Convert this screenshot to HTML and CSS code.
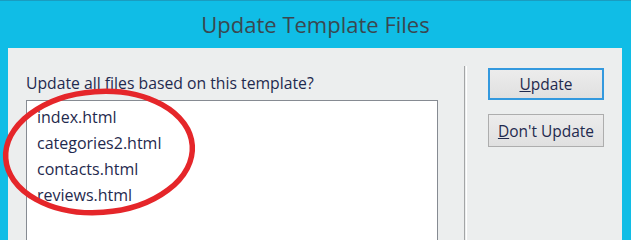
FILE: index.html
```html
<!DOCTYPE html>
<html>
<head>
<meta charset="utf-8">
<link rel="stylesheet" href="styles.css">
</head>
<body>
<div class="window">
  <div class="titlebar">Update Template Files</div>
  <div class="panel">
    <div class="main">
      <div class="label">Update all files based on this template?</div>
      <div class="list">
        <div class="item">index.html</div>
        <div class="item">categories2.html</div>
        <div class="item">contacts.html</div>
        <div class="item">reviews.html</div>
      </div>
    </div>
    <div class="sep"></div>
    <div class="buttons">
      <div class="btn btn-default"><span class="key">U</span>pdate</div>
      <div class="btn"><span class="key">D</span>on't Update</div>
    </div>
  </div>
  <svg class="circle" width="631" height="218" viewBox="0 0 631 218">
    <ellipse cx="99" cy="151" rx="93.5" ry="60.5" transform="rotate(-4 99 151)" fill="none" stroke="#e5262a" stroke-width="5.5"/>
  </svg>
</div>
</body>
</html>
```
FILE: styles.css
```css
html, body {
  margin: 0;
  padding: 0;
  background: #10bde6;
}
body {
  width: 631px;
  min-height: 218px;
  height: 100vh;
  overflow: hidden;
  font-family: "Open Sans", "Noto Sans", "DejaVu Sans", sans-serif;
}
.window {
  position: relative;
  width: 631px;
  height: 100%;
  border-top: 1px solid #1a9cc0;
  box-sizing: border-box;
  display: flex;
  flex-direction: column;
}
.titlebar {
  height: 47px;
  flex: none;
  display: flex;
  align-items: center;
  justify-content: center;
  font-size: 22px;
  color: #3a4750;
  padding-bottom: 1px;
  box-sizing: border-box;
}
.panel {
  flex: 1;
  margin-left: 8px;
  width: 614px;
  background: #eceeee;
  display: flex;
  box-sizing: border-box;
}
.main {
  padding-left: 18px;
  padding-top: 25px;
  width: 412px;
  display: flex;
  flex-direction: column;
}
.label {
  font-size: 15.75px;
  color: #1f2a4e;
  height: 27px;
  line-height: 20px;
  white-space: nowrap;
}
.list {
  flex: 1;
  background: #ffffff;
  border: 1px solid #868b92;
  border-bottom: none;
  padding-top: 3px;
  padding-left: 10px;
  box-sizing: border-box;
}
.item {
  font-size: 16px;
  color: #1f2a4e;
  line-height: 26px;
}
.sep {
  margin-left: 26px;
  margin-top: 18px;
  width: 1px;
  border-left: 1px solid #a3a5a6;
  border-right: 1px solid #ffffff;
}
.buttons {
  margin-left: 21px;
  padding-top: 20px;
  display: flex;
  flex-direction: column;
  gap: 14px;
}
.btn {
  width: 116px;
  height: 33px;
  box-sizing: border-box;
  border: 1px solid #adadad;
  background: linear-gradient(#ececec, #e0e0e0);
  display: flex;
  align-items: center;
  justify-content: center;
  font-size: 15.5px;
  color: #1f2a4e;
}
.btn-default {
  border: 2px solid #3399de;
  height: 32px;
}
.key {
  text-decoration: underline;
}
.circle {
  position: absolute;
  left: 0;
  top: 0;
  pointer-events: none;
}
```
